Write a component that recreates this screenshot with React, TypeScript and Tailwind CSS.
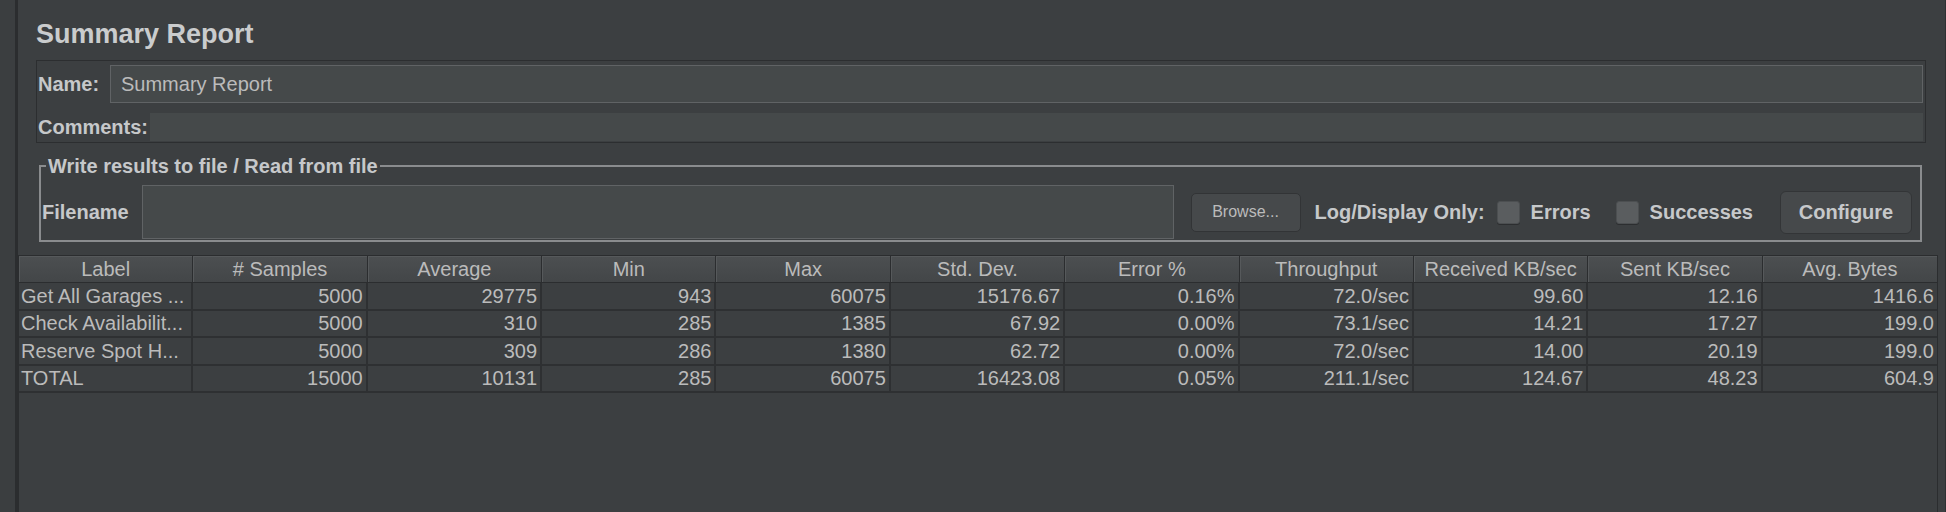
import React from "react";

const columns = [
  "Label",
  "# Samples",
  "Average",
  "Min",
  "Max",
  "Std. Dev.",
  "Error %",
  "Throughput",
  "Received KB/sec",
  "Sent KB/sec",
  "Avg. Bytes",
];

const rows = [
  ["Get All Garages ...", "5000", "29775", "943", "60075", "15176.67", "0.16%", "72.0/sec", "99.60", "12.16", "1416.6"],
  ["Check Availabilit...", "5000", "310", "285", "1385", "67.92", "0.00%", "73.1/sec", "14.21", "17.27", "199.0"],
  ["Reserve Spot H...", "5000", "309", "286", "1380", "62.72", "0.00%", "72.0/sec", "14.00", "20.19", "199.0"],
  ["TOTAL", "15000", "10131", "285", "60075", "16423.08", "0.05%", "211.1/sec", "124.67", "48.23", "604.9"],
];

function CheckBox({ label }: { label: string }) {
  return (
    <div className="flex items-center">
      <div className="w-[23px] h-[23px] rounded-[3px] bg-[#5a5d5f] border border-[#4c4f51] shadow-[0_1px_0_#2c2e30]" />
      <span className="ml-[11px] font-bold text-[#c6c8ca]">{label}</span>
    </div>
  );
}

export default function App() {
  return (
    <div className="flex h-[512px] w-full overflow-hidden bg-[#3c3f41] text-[20px] text-[#bbbbbb] font-['Liberation_Sans',Arial,sans-serif]">
      {/* tree side + splitter */}
      <div className="w-[15px] shrink-0 bg-[#3b3e40]" />
      <div className="w-[3px] shrink-0 bg-[#2b2d2f]" />

      <div className="flex flex-1 flex-col border-r border-[#2f3133]">
        <div className="pl-[18px] pr-[19px]">
          <h1 className="mt-[18px] h-[32px] text-[27px] font-bold leading-[32px] text-[#cacccd]">
            Summary Report
          </h1>

          {/* name / comments */}
          <div className="mt-[10px] border border-[#2c2e30]">
            <div className="mt-[4px] flex items-center pl-px pr-[2px]">
              <span className="w-[72px] shrink-0 font-bold text-[#c6c8ca]">Name:</span>
              <div className="flex h-[38px] flex-1 items-center border border-[#606365] bg-[#45494a] pl-[10px]">
                Summary Report
              </div>
            </div>
            <div className="mt-[9px] flex items-center pl-px pr-[2px]">
              <span className="w-[112px] shrink-0 whitespace-nowrap font-bold text-[#c6c8ca]">Comments:</span>
              <div className="h-[28px] flex-1 bg-[#45494a]" />
            </div>
          </div>

          {/* write results */}
          <fieldset className="ml-[3px] mr-[4px] mt-[12px] border-2 border-[#8a8c8e] pl-px pr-[8px] pt-[8px] pb-[1px]">
            <legend className="ml-[4px] px-[2px] font-bold leading-[22px] text-[#c6c8ca]">
              Write results to file / Read from file
            </legend>
            <div className="flex h-[54px] items-center">
              <span className="w-[100px] shrink-0 font-bold text-[#c6c8ca]">Filename</span>
              <div className="h-[54px] flex-1 border border-[#606365] bg-[#45494a]" />
              <button className="ml-[17px] h-[39px] w-[110px] rounded-[5px] border border-[#323436] bg-[#46494b] text-[16px] text-[#bbbbbb]">
                Browse...
              </button>
              <span className="ml-[14px] whitespace-nowrap font-bold text-[#c6c8ca]">Log/Display Only:</span>
              <div className="ml-[12px]">
                <CheckBox label="Errors" />
              </div>
              <div className="ml-[25px]">
                <CheckBox label="Successes" />
              </div>
              <button className="ml-[27px] h-[43px] w-[132px] rounded-[6px] border border-[#333537] bg-[#46494b] font-bold text-[#c6c8ca]">
                Configure
              </button>
            </div>
          </fieldset>
        </div>

        {/* results table */}
        <div className="mr-[7px] mt-[13px] flex-1 border-l border-r border-t border-[#2b2d2f]">
          <div className="grid h-[27px] grid-cols-11 border-b border-[#2b2d2f] bg-gradient-to-b from-[#4c4f51] to-[#434648]">
            {columns.map((c, i) => (
              <div
                key={c}
                className={
                  i === columns.length - 1
                    ? "flex items-center justify-center whitespace-nowrap leading-none shadow-[inset_1px_1px_0_#56595b]"
                    : "flex items-center justify-center whitespace-nowrap leading-none border-r border-[#2b2d2f] shadow-[inset_1px_1px_0_#56595b]"
                }
              >
                {c}
              </div>
            ))}
          </div>
          {rows.map((r) => (
            <div key={r[0]} className="grid h-[27.5px] grid-cols-11 border-b-2 border-[#2e3032]">
              {r.map((v, i) => (
                <div
                  key={i}
                  className={
                    i === 0
                      ? "flex items-center overflow-hidden whitespace-nowrap pl-[2px] leading-none border-r-2 border-[#2e3032]"
                      : i === r.length - 1
                      ? "flex items-center justify-end whitespace-nowrap pr-[3px] leading-none"
                      : "flex items-center justify-end whitespace-nowrap pr-[3px] leading-none border-r-2 border-[#2e3032]"
                  }
                >
                  {v}
                </div>
              ))}
            </div>
          ))}
        </div>
      </div>
    </div>
  );
}
